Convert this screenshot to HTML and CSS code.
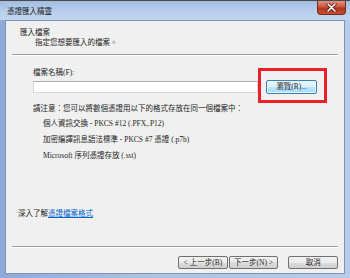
FILE: index.html
```html
<!DOCTYPE html>
<html lang="zh-Hant">
<head>
<meta charset="utf-8">
<title>憑證匯入精靈</title>
<link rel="stylesheet" href="styles.css">
</head>
<body>
<div class="window">
  <div class="titlebar">
    <span class="title">憑證匯入精靈</span>
    <button class="close" aria-label="關閉">
      <svg width="11" height="9" viewBox="0 0 11 9"><path d="M2 1 L9 8 M9 1 L2 8" stroke="#5a1a10" stroke-width="3.2" stroke-linecap="round"/><path d="M2 1 L9 8 M9 1 L2 8" stroke="#ffffff" stroke-width="1.6" stroke-linecap="round"/></svg>
    </button>
  </div>
  <div class="panel">
    <div class="header">
      <div class="h-title">匯入檔案</div>
      <div class="h-sub">指定您想要匯入的檔案。</div>
    </div>
    <div class="sep"></div>
    <div class="body">
      <div class="label">檔案名稱(F):</div>
      <div class="file-row">
        <div class="input"></div>
        <button class="btn browse">瀏覽(R)...</button>
        <div class="highlight"></div>
      </div>
      <div class="note">請注意：您可以將數個憑證用以下的格式存放在同一個檔案中：</div>
      <ul class="formats">
        <li>個人資訊交換 - PKCS #12 (.PFX,.P12)</li>
        <li>加密編譯訊息語法標準 - PKCS #7 憑證 (.p7b)</li>
        <li>Microsoft 序列憑證存放 (.sst)</li>
      </ul>
    </div>
    <div class="more">深入了解<a href="#" class="link">憑證檔案格式</a></div>
    <div class="sep bottom-sep"></div>
    <div class="footer">
      <button class="btn nav">&lt; 上一步(B)</button>
      <button class="btn nav">下一步(N) &gt;</button>
      <button class="btn cancel">取消</button>
    </div>
  </div>
</div>
</body>
</html>
```
FILE: styles.css
```css
* { box-sizing: border-box; }
html, body { margin: 0; padding: 0; }
body {
  width: 350px;
  height: 278px;
  overflow: hidden;
  font-family: "Liberation Serif", "Noto Sans CJK TC", serif;
  font-size: 7.5px;
  color: #1e1e1e;
}
.window {
  width: 350px;
  height: 278px;
  display: flex;
  flex-direction: column;
  background: linear-gradient(90deg, #8eaad8 0%, #a9c2e6 40%, #b6cdea 100%);
  border-top: 1px solid #4a4a4a;
}
.titlebar {
  height: 19px;
  display: flex;
  align-items: flex-start;
  padding-left: 7px;
  background: linear-gradient(180deg, #a3bde2 0%, #b9cfeb 60%, #c2d6ee 100%);
}
.title {
  margin-top: 5px;
  font-family: "Noto Sans CJK TC", sans-serif;
  font-size: 7.5px;
  line-height: 10px;
  color: #1a1a1a;
}
.close {
  margin-left: auto;
  margin-right: 4px;
  width: 29px;
  height: 14px;
  padding: 0;
  border: 1px solid #7b2a1c;
  border-top: none;
  border-radius: 0 0 4px 4px;
  background: linear-gradient(180deg, #e09482 0%, #cc5840 45%, #b4361f 55%, #c44d34 100%);
  display: flex;
  align-items: center;
  justify-content: center;
}
.panel {
  flex: 1;
  margin: 0 5px 4px 5px;
  background: #f0f0f0;
  border: 1px solid #7f93b3;
  display: flex;
  flex-direction: column;
  padding: 0 6px;
}
.header {
  padding: 7px 0 6px 8px;
  line-height: 10px;
}
.h-sub {
  padding-left: 15px;
}
.sep {
  height: 2px;
  border-top: 1px solid #a0a0a0;
  border-bottom: 1px solid #ffffff;
}
.body {
  padding: 12px 0 0 21px;
  line-height: 10px;
}
.label {
  margin-bottom: 2px;
}
.file-row {
  position: relative;
  display: flex;
  align-items: center;
  gap: 8px;
  height: 14px;
}
.input {
  width: 225px;
  height: 12px;
  background: #ffffff;
  border: 1px solid #d4d8de;
  border-top-color: #abadb3;
}
.btn {
  font-family: "Liberation Serif", "Noto Sans CJK TC", serif;
  font-size: 7.5px;
  line-height: 10px;
  color: #1e1e1e;
  padding: 0;
  border: 1px solid #707070;
  border-radius: 2px;
  background: linear-gradient(180deg, #f2f2f2 0%, #ebebeb 50%, #dddddd 50%, #cfcfcf 100%);
}
.browse {
  width: 51px;
  height: 14px;
  border-color: #3c7fb1;
  background: linear-gradient(180deg, #eaf6fd 0%, #d9f0fc 50%, #bee6fd 50%, #a7d9f5 100%);
  box-shadow: inset 0 0 0 1px #e8f6fd;
}
.highlight {
  position: absolute;
  left: 225px;
  top: -12px;
  width: 69px;
  height: 35px;
  border: 3px solid #e8202a;
}
.note {
  margin-top: 10px;
}
.formats {
  list-style: none;
  margin: 5px 0 0 10px;
  padding: 0;
}
.formats li {
  line-height: 10px;
  margin-bottom: 6px;
}
.more {
  margin-top: auto;
  margin-bottom: 27px;
  padding-left: 6px;
  line-height: 10px;
}
.link {
  color: #0066cc;
  text-decoration: underline;
}
.footer {
  display: flex;
  align-items: center;
  padding: 8px 0 4px 166px;
}
.nav {
  width: 50px;
  height: 13px;
  margin-right: 1px;
}
.cancel {
  width: 50px;
  height: 13px;
  margin-left: 9px;
}
```
